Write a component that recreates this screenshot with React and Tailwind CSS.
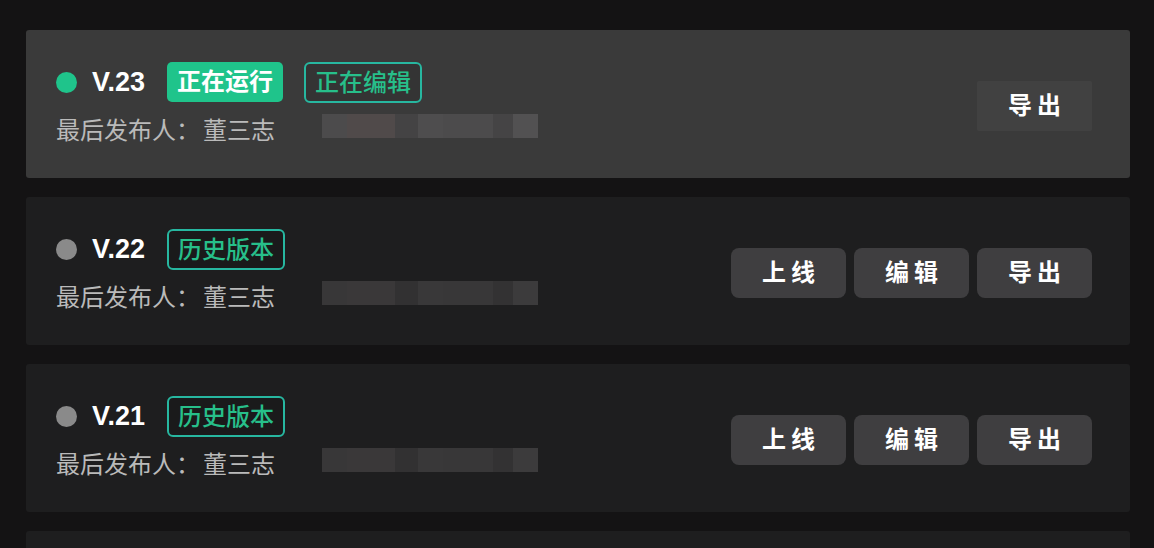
const versions = [
  { id: 'V.23', active: true, tags: ['running', 'editing'] },
  { id: 'V.22', active: false, tags: ['history'] },
  { id: 'V.21', active: false, tags: ['history'] },
];

// redacted mosaic blocks after the publisher name
const mosaicLight = ['#4c4b4c', '#504a4a', '#444344', '#4e4d4e', '#4c4b4c', '#454445', '#525152'];
const mosaicDark = ['#383738', '#3a3839', '#323132', '#393839', '#383738', '#333233', '#3c3b3c'];
const mosaicWidths = ['w-[25px]', 'w-[48px]', 'w-[23px]', 'w-[25px]', 'w-[50px]', 'w-[20px]', 'w-[25px]'];

function Mosaic({ active }) {
  const colors = active ? mosaicLight : mosaicDark;
  return (
    <div className="ml-[47px] mb-[10px] flex h-[24px]">
      {colors.map((c, i) => (
        <div key={i} className={`h-full ${mosaicWidths[i]}`} style={{ backgroundColor: c }} />
      ))}
    </div>
  );
}

function Tag({ type }) {
  if (type === 'running') {
    return (
      <span className="flex h-[40px] items-center rounded-[5px] bg-[#1fc48b] px-[10px] text-[24px] font-bold text-white">
        正在运行
      </span>
    );
  }
  const label = type === 'editing' ? '正在编辑' : '历史版本';
  return (
    <span className="flex h-[41px] items-center rounded-[6px] border-2 border-[#27b7a0] bg-black/10 px-[9px] text-[24px] font-medium text-[#27bf8a]">
      {label}
    </span>
  );
}

function ActionButton({ label, flat }) {
  return (
    <button
      className={`flex h-[50px] w-[115px] items-center justify-center text-[24px] font-bold tracking-[0.2em] text-white ${
        flat ? 'rounded-[2px] bg-[#414141]' : 'rounded-[8px] bg-[#3f3e40]'
      }`}
    >
      <span className="pl-[0.2em]">{label}</span>
    </button>
  );
}

function VersionCard({ version }) {
  const { id, active, tags } = version;
  return (
    <div
      className={`flex h-[148px] shrink-0 items-center justify-between rounded-[3px] pl-[30px] pr-[38px] ${
        active ? 'bg-[#3a3a3a]' : 'bg-[#1e1e1f]'
      }`}
    >
      <div className="flex flex-col">
        <div className="flex h-[40px] items-center">
          <span className={`h-[21px] w-[21px] rounded-full ${active ? 'bg-[#1fc48b]' : 'bg-[#8a8a8a]'}`} />
          <span className="ml-[15px] text-[27px] font-bold text-white">{id}</span>
          <div className="ml-[22px] flex gap-[21px]">
            {tags.map((t) => (
              <Tag key={t} type={t} />
            ))}
          </div>
        </div>
        <div className="mt-[13px] flex h-[30px] items-center text-[24px] text-[#bababa]">
          <span>最后发布人：</span>
          <span className="ml-[3px]">董三志</span>
          <Mosaic active={active} />
        </div>
      </div>
      <div className="mt-[4px] flex gap-[8px]">
        {active ? (
          <ActionButton label="导出" flat />
        ) : (
          <>
            <ActionButton label="上线" />
            <ActionButton label="编辑" />
            <ActionButton label="导出" />
          </>
        )}
      </div>
    </div>
  );
}

export default function App() {
  return (
    <div
      className="flex h-[548px] w-[1154px] flex-col gap-[19px] overflow-hidden bg-[#141314] pl-[26px] pr-[24px] pt-[30px]"
      style={{ fontFamily: '"Liberation Sans", "Noto Sans CJK SC", sans-serif' }}
    >
      {versions.map((v) => (
        <VersionCard key={v.id} version={v} />
      ))}
      <div className="h-[148px] shrink-0 rounded-[3px] bg-[#1e1e1f]" />
    </div>
  );
}
